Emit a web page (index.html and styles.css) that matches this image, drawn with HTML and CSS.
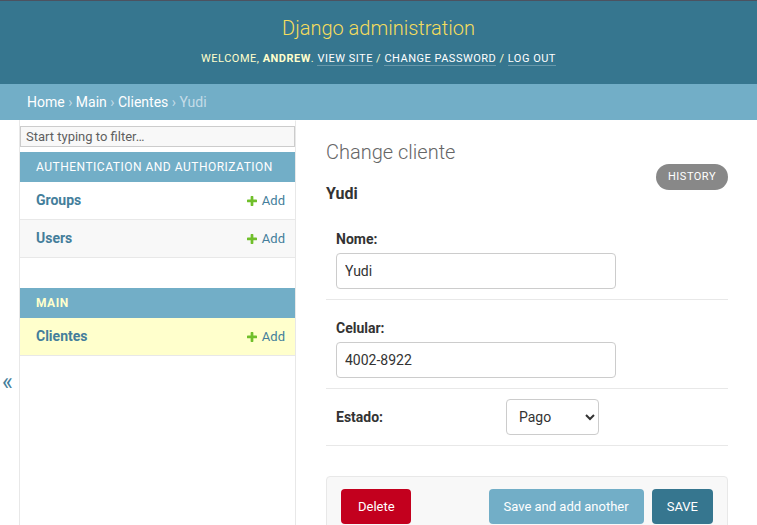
FILE: index.html
```html
<!DOCTYPE html>
<html lang="en">
<head>
<meta charset="utf-8">
<title>Change cliente | Django site admin</title>
<link rel="stylesheet" href="styles.css">
</head>
<body>
<header class="header">
  <h1 class="branding">Django administration</h1>
  <div class="user-tools">Welcome, <strong>andrew</strong>. <a href="#">View site</a> / <a href="#">Change password</a> / <a href="#">Log out</a></div>
</header>
<nav class="breadcrumbs"><a href="#">Home</a> › <a href="#">Main</a> › <a href="#">Clientes</a> › Yudi</nav>
<div class="main">
  <button class="toggle-nav" type="button" aria-label="Toggle navigation">«</button>
  <nav class="sidebar">
    <input class="nav-filter" type="text" placeholder="Start typing to filter…">
    <section class="app">
      <div class="app-caption"><a href="#">Authentication and Authorization</a></div>
      <div class="model-row"><a class="model-name" href="#">Groups</a><a class="addlink" href="#"><svg class="plus" viewBox="192 192 1408 1408" width="10" height="10"><path fill="#70bf2b" d="M1600 796v192q0 40-28 68t-68 28h-416v416q0 40-28 68t-68 28h-192q-40 0-68-28t-28-68v-416h-416q-40 0-68-28t-28-68v-192q0-40 28-68t68-28h416v-416q0-40 28-68t68-28h192q40 0 68 28t28 68v416h416q40 0 68 28t28 68z"/></svg>Add</a></div>
      <div class="model-row alt"><a class="model-name" href="#">Users</a><a class="addlink" href="#"><svg class="plus" viewBox="192 192 1408 1408" width="10" height="10"><path fill="#70bf2b" d="M1600 796v192q0 40-28 68t-68 28h-416v416q0 40-28 68t-68 28h-192q-40 0-68-28t-28-68v-416h-416q-40 0-68-28t-28-68v-192q0-40 28-68t68-28h416v-416q0-40 28-68t68-28h192q40 0 68 28t28 68v416h416q40 0 68 28t28 68z"/></svg>Add</a></div>
    </section>
    <section class="app current-app">
      <div class="app-caption"><a href="#">Main</a></div>
      <div class="model-row current"><a class="model-name" href="#">Clientes</a><a class="addlink" href="#"><svg class="plus" viewBox="192 192 1408 1408" width="10" height="10"><path fill="#70bf2b" d="M1600 796v192q0 40-28 68t-68 28h-416v416q0 40-28 68t-68 28h-192q-40 0-68-28t-28-68v-416h-416q-40 0-68-28t-28-68v-192q0-40 28-68t68-28h416v-416q0-40 28-68t68-28h192q40 0 68 28t28 68v416h416q40 0 68 28t28 68z"/></svg>Add</a></div>
    </section>
  </nav>
  <main class="content">
    <h1 class="page-title">Change cliente</h1>
    <div class="subhead">
      <h2 class="object-name">Yudi</h2>
      <a class="history-link" href="#">History</a>
    </div>
    <form class="change-form">
      <fieldset class="fields">
        <div class="form-row stacked">
          <label for="id_nome">Nome:</label>
          <input class="text-input" id="id_nome" type="text" value="Yudi">
        </div>
        <div class="form-row stacked">
          <label for="id_celular">Celular:</label>
          <input class="text-input" id="id_celular" type="text" value="4002-8922">
        </div>
        <div class="form-row inline">
          <label for="id_estado">Estado:</label>
          <select class="select-input" id="id_estado"><option>Pago</option><option>Pendente</option></select>
        </div>
      </fieldset>
      <div class="submit-row">
        <a class="deletelink" href="#">Delete</a>
        <input class="btn btn-secondary" type="submit" value="Save and add another">
        <input class="btn btn-default" type="submit" value="Save">
      </div>
    </form>
  </main>
</div>
</body>
</html>
```

FILE: styles.css
```css
* {
  box-sizing: border-box;
}

html, body {
  margin: 0;
  padding: 0;
}

body {
  font-family: Roboto, "Liberation Sans", Arial, sans-serif;
  font-size: 14px;
  color: #333;
  background: #fff;
}

a {
  text-decoration: none;
}

/* Header */
.header {
  background: #36768f;
  border-top: 1px solid #4c5260;
  padding: 15px 30px;
  text-align: center;
}

.branding {
  margin: 0 0 9px;
  font-size: 20px;
  font-weight: 300;
  line-height: 24px;
  color: #f5dd5d;
}

.user-tools {
  font-size: 11px;
  line-height: 20px;
  letter-spacing: 0.5px;
  text-transform: uppercase;
  color: #ffc;
}

.user-tools strong {
  font-weight: 700;
}

.user-tools a {
  color: #fff;
  border-bottom: 1px solid rgba(255, 255, 255, 0.25);
}

/* Breadcrumbs */
.breadcrumbs {
  background: #72aec7;
  padding: 10px 27px;
  line-height: 16px;
  font-size: 14px;
  color: #c4dce8;
}

.breadcrumbs a {
  color: #fff;
}

/* Main */
.main {
  display: flex;
  align-items: flex-start;
}

.toggle-nav {
  flex: 0 0 20px;
  width: 20px;
  height: 525px;
  display: flex;
  align-items: center;
  justify-content: flex-start;
  padding: 0 0 0 2px;
  margin: 0;
  border: 0;
  border-right: 1px solid #e8e8e8;
  background: #fff;
  color: #447e9b;
  font-family: Roboto, "Liberation Sans", sans-serif;
  font-size: 23px;
  line-height: 1;
  cursor: pointer;
}

.sidebar {
  flex: 0 0 276px;
  width: 276px;
  height: 525px;
  border-top: 1px solid transparent;
  border-right: 1px solid #e8e8e8;
  background: #fff;
}

.nav-filter {
  display: block;
  width: 100%;
  height: 21px;
  margin: 5px 0;
  padding: 2px 5px;
  border: 1px solid #ccc;
  background: #f8f8f8;
  font-family: Roboto, "Liberation Sans", sans-serif;
  font-size: 13px;
  color: #333;
  outline: none;
}

.nav-filter::placeholder {
  color: #5f5f5f;
}

.app {
  margin-bottom: 30px;
}

.app-caption {
  background: #72aec7;
  padding: 8px 8px 8px 16px;
  font-size: 12px;
  line-height: 14px;
  letter-spacing: 0.5px;
  text-transform: uppercase;
}

.app-caption a {
  color: #fff;
}

.current-app .app-caption a {
  color: #ffc;
  font-weight: 700;
}

.model-row {
  display: flex;
  justify-content: space-between;
  align-items: center;
  padding: 8px 10px 8px 16px;
  line-height: 21px;
  border-bottom: 1px solid #e8e8e8;
}

.model-row.alt {
  background: #f8f8f8;
}

.model-row.current {
  background: #ffc;
}

.model-name {
  font-size: 14px;
  font-weight: 700;
  color: #447e9b;
}

.addlink {
  display: inline-flex;
  align-items: center;
  gap: 5px;
  font-size: 13px;
  color: #447e9b;
}

.plus {
  display: block;
}

/* Content */
.content {
  flex: 1 1 auto;
  min-width: 0;
  padding: 20px 29px 20px 30px;
}

.page-title {
  margin: 0;
  font-size: 20px;
  line-height: 24px;
  font-weight: 300;
  color: #666;
}

.subhead {
  display: flex;
  justify-content: space-between;
  align-items: flex-start;
}

.object-name {
  margin: 20px 0 0;
  font-size: 16px;
  line-height: 19px;
  font-weight: 700;
  color: #333;
}

.history-link {
  display: block;
  padding: 3px 12px;
  border-radius: 15px;
  background: #888;
  color: #fff;
  font-size: 11px;
  line-height: 20px;
  letter-spacing: 0.5px;
  text-transform: uppercase;
}

.change-form {
  margin: 8px 0 0;
}

.fields {
  margin: 0;
  padding: 0;
  border: 0;
  min-width: 0;
}

.form-row {
  padding: 10px;
  border-bottom: 1px solid #e8e8e8;
}

.form-row label {
  font-size: 14px;
  font-weight: 700;
  line-height: 20px;
  color: #333;
}

.form-row.stacked {
  display: flex;
  flex-direction: column;
  align-items: flex-start;
}

.form-row.stacked label {
  padding: 8px 0 4px;
}

.form-row.inline {
  display: flex;
  align-items: flex-start;
}

.form-row.inline label {
  flex: 0 0 170px;
  width: 170px;
  padding: 8px 10px 0 0;
}

.text-input {
  width: 280px;
  height: 36px;
  margin: 0;
  padding: 0 8px;
  border: 1px solid #ccc;
  border-radius: 4px;
  background: #fff;
  font-family: Roboto, "Liberation Sans", sans-serif;
  font-size: 14px;
  color: #333;
}

.select-input {
  width: 93px;
  height: 36px;
  margin: 0;
  padding: 0 8px;
  border: 1px solid #ccc;
  border-radius: 4px;
  background: #fff;
  font-family: Roboto, "Liberation Sans", sans-serif;
  font-size: 14px;
  color: #333;
}

/* Submit row */
.submit-row {
  display: flex;
  flex-wrap: wrap;
  gap: 8px;
  margin-top: 30px;
  padding: 12px 14px;
  border: 1px solid #e8e8e8;
  border-radius: 4px;
  background: #f8f8f8;
}

.deletelink {
  display: block;
  margin-right: auto;
  height: 35px;
  line-height: 35px;
  padding: 0 16px 0 17px;
  border-radius: 4px;
  background: #c3001e;
  color: #fff;
  font-size: 13px;
}

.btn {
  height: 35px;
  margin: 0;
  border: 0;
  border-radius: 4px;
  color: #fff;
  font-family: Roboto, "Liberation Sans", sans-serif;
  font-size: 13px;
  cursor: pointer;
}

.btn-secondary {
  background: #72aec7;
  padding: 0 15px;
}

.btn-default {
  background: #36768f;
  padding: 0 15px;
  text-transform: uppercase;
}
```
